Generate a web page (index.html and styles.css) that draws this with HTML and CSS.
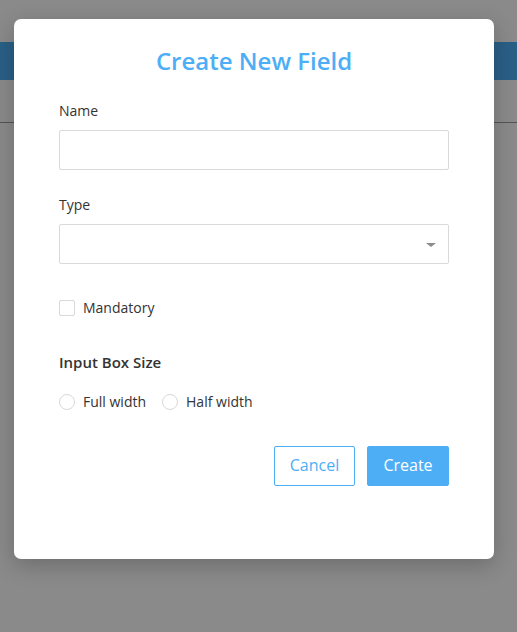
FILE: index.html
```html
<!DOCTYPE html>
<html>
<head>
<meta charset="utf-8">
<link rel="stylesheet" href="styles.css">
</head>
<body>
<div class="page">
  <div class="topbar"></div>
  <div class="subbar"></div>
</div>
<div class="overlay">
  <div class="modal">
    <h1 class="title">Create New Field</h1>
    <div class="field">
      <label class="label">Name</label>
      <div class="input"></div>
    </div>
    <div class="field">
      <label class="label">Type</label>
      <div class="input select"><span class="caret"></span></div>
    </div>
    <div class="check-row">
      <span class="checkbox"></span>
      <span class="opt-text">Mandatory</span>
    </div>
    <div class="section-title">Input Box Size</div>
    <div class="radio-row">
      <span class="radio-item"><span class="radio"></span><span class="opt-text">Full width</span></span>
      <span class="radio-item"><span class="radio"></span><span class="opt-text">Half width</span></span>
    </div>
    <div class="actions">
      <button class="btn btn-outline">Cancel</button>
      <button class="btn btn-primary">Create</button>
    </div>
  </div>
</div>
</body>
</html>
```

FILE: styles.css
```css
html, body {
  margin: 0;
  padding: 0;
  width: 517px;
  height: 632px;
  overflow: hidden;
  background: #8a8a8a;
  font-family: "Open Sans", "Noto Sans", sans-serif;
}
.page {
  display: flex;
  flex-direction: column;
}
.topbar {
  margin-top: 42px;
  height: 38px;
  background: #2a5f86;
}
.subbar {
  height: 42px;
  border-bottom: 1px solid #545454;
}
.overlay {
  position: absolute;
  inset: 0;
}
.modal {
  position: absolute;
  left: 14px;
  top: 19px;
  width: 480px;
  height: 540px;
  box-sizing: border-box;
  background: #fff;
  border-radius: 7px;
  padding: 26px 45px 0 45px;
  box-shadow: 0 6px 22px rgba(0,0,0,0.22);
  display: flex;
  flex-direction: column;
}
.title {
  margin: 0;
  text-align: center;
  font-size: 24px;
  line-height: 32px;
  font-weight: 600;
  color: #4daef6;
}
.field {
  display: flex;
  flex-direction: column;
}
.field:first-of-type { margin-top: 24px; }
.field + .field { margin-top: 25px; }
.label {
  font-size: 14px;
  line-height: 20px;
  color: #333;
  margin-bottom: 9px;
}
.input {
  height: 40px;
  box-sizing: border-box;
  border: 1px solid #d9d9d9;
  border-radius: 2px;
  position: relative;
}
.select .caret {
  position: absolute;
  right: 12px;
  top: 18px;
  width: 0;
  height: 0;
  border-left: 5px solid transparent;
  border-right: 5px solid transparent;
  border-top: 4px solid #8c8c8c;
}
.check-row {
  margin-top: 36px;
  display: flex;
  align-items: center;
  height: 16px;
}
.checkbox {
  width: 16px;
  height: 16px;
  box-sizing: border-box;
  border: 1px solid #d9d9d9;
  border-radius: 2px;
}
.opt-text {
  font-size: 14px;
  line-height: 20px;
  color: #333;
  margin-left: 8px;
}
.section-title {
  margin-top: 36px;
  font-size: 15px;
  line-height: 20px;
  font-weight: 600;
  color: #333;
}
.radio-row {
  margin-top: 22px;
  display: flex;
  align-items: center;
  height: 16px;
  gap: 16px;
}
.radio-item {
  display: flex;
  align-items: center;
}
.radio {
  width: 16px;
  height: 16px;
  box-sizing: border-box;
  border: 1px solid #d9d9d9;
  border-radius: 50%;
}
.actions {
  margin-top: 36px;
  display: flex;
  justify-content: flex-end;
  gap: 12px;
}
.btn {
  height: 40px;
  box-sizing: border-box;
  font-family: "Open Sans", "Noto Sans", sans-serif;
  font-size: 16px;
  line-height: 22px;
  border-radius: 2px;
  padding: 0 0 2px 0;
}
.btn-outline {
  width: 81px;
  background: #fff;
  border: 1px solid #4daef6;
  color: #4daef6;
}
.btn-primary {
  width: 82px;
  background: #4daef6;
  border: 1px solid #4daef6;
  color: #fff;
}
```
